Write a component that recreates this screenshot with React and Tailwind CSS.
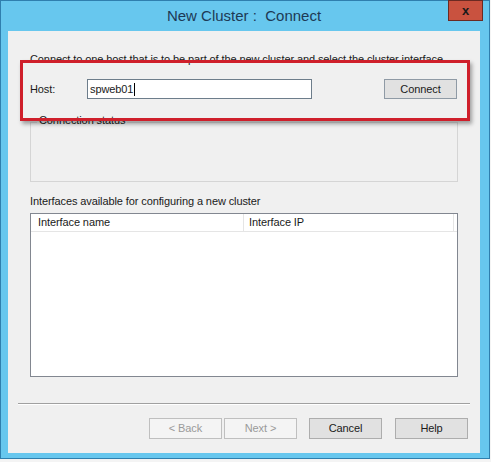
export default function App() {
  const font = { fontFamily: '"Liberation Sans", Arial, sans-serif' }

  return (
    <div className="w-[491px] h-[462px] bg-[#f4f4f4] overflow-hidden" style={font}>
      <div className="w-[490px] h-[459px] bg-[#67c7ee] border border-[#2f7fae] flex flex-col pl-[7px] pr-[9px] pb-[5px]">
        {/* Title bar */}
        <div className="relative h-[30px] flex items-center justify-center">
          <span className="text-[15px] text-[#1d3a55] whitespace-nowrap">New Cluster :&nbsp; Connect</span>
          <div className="absolute right-[-3px] top-[-1px] w-[35px] h-[21px] bg-[#c9523f] border border-[#6b2a22] flex items-center justify-center">
            <span className="text-[13px] font-bold text-[#1a1a1a] leading-none">x</span>
          </div>
        </div>

        {/* Client area */}
        <div className="relative flex-1 bg-[#f0f0f0] text-[11px] tracking-[-0.1px] text-[#1a1a1a] flex flex-col whitespace-nowrap">
          <div className="pl-[22px] pt-[21px] leading-[14px]">
            Connect to one host that is to be part of the new cluster and select the cluster interface
          </div>

          <div className="flex items-center pl-[22px] pr-[23px] mt-[13px] h-[20px]">
            <span className="w-[57px]">Host:</span>
            <div className="w-[225px] h-[20px] bg-white border border-[#6d7d8b] flex items-center pl-[2px]">
              <span>spweb01</span>
              <span className="w-px h-[13px] bg-black ml-[1px]" />
            </div>
            <div className="ml-auto w-[73px] h-[20px] bg-[#e1e1e1] border border-[#8f9aa5] flex items-center justify-center">
              Connect
            </div>
          </div>

          {/* Connection status group */}
          <div className="relative mx-[22px] mt-[23px] h-[60px] border border-[#d5d5d5] border-t-[#dcdcdc]">
            <span className="absolute left-[6px] top-[-10px] px-[2px] bg-[#f0f0f0] leading-[14px]">Connection status</span>
          </div>

          <div className="pl-[22px] mt-[12px] leading-[14px]">
            Interfaces available for configuring a new cluster
          </div>

          {/* List view */}
          <div className="mx-[22px] mt-[5px] h-[164px] bg-white border border-[#828790] flex flex-col">
            <div className="flex h-[18px] border-b border-[#e5e5e5] items-center">
              <div className="w-[213px] pl-[7px] border-r border-[#e5e5e5] h-full flex items-center">Interface name</div>
              <div className="flex-1 pl-[5px] border-r border-[#e5e5e5] h-full flex items-center">Interface IP</div>
              <div className="w-[3px]" />
            </div>
          </div>

          <div className="mx-[10px] mt-[26px] h-[2px] border-t border-[#a0a0a0] border-b border-b-white" />

          {/* Buttons */}
          <div className="flex justify-end pr-[12px] mt-[13px]">
            <div className="w-[73px] h-[21px] bg-[#f4f4f4] border border-[#bfbfbf] text-[#9a9a9a] flex items-center justify-center">&lt; Back</div>
            <div className="w-[73px] h-[21px] ml-[2px] bg-[#f4f4f4] border border-[#bfbfbf] text-[#9a9a9a] flex items-center justify-center">Next &gt;</div>
            <div className="w-[73px] h-[21px] ml-[12px] bg-[#e1e1e1] border border-[#adadad] flex items-center justify-center">Cancel</div>
            <div className="w-[73px] h-[21px] ml-[13px] bg-[#e1e1e1] border border-[#adadad] flex items-center justify-center">Help</div>
          </div>

          {/* Red highlight annotation */}
          <div className="absolute left-[12px] top-[29px] w-[450px] h-[61px] border-[3px] border-[#cf1f2b] shadow-[2px_3px_4px_rgba(0,0,0,0.35)]" />
        </div>
      </div>
    </div>
  )
}
